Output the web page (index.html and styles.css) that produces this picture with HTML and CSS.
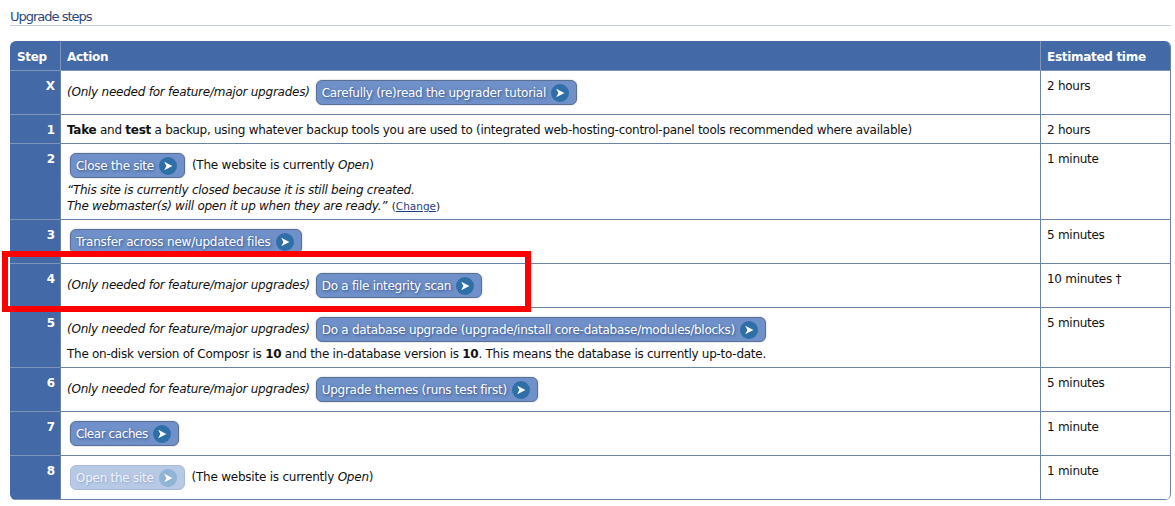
FILE: index.html
```html
<!DOCTYPE html>
<html lang="en">
<head>
<meta charset="utf-8">
<title>Upgrade steps</title>
<link rel="stylesheet" href="styles.css">
</head>
<body>
<svg class="defs" width="0" height="0" aria-hidden="true"><symbol id="go" viewBox="0 0 18 18"><circle cx="9" cy="9" r="9" fill="currentColor"/><path d="M5.2 4.8 13.4 9l-8.2 4.2L7.4 9z" fill="#fff"/></symbol></svg>
<h2 class="heading">Upgrade steps</h2>
<table class="steps">
<colgroup><col class="c-step"><col class="c-action"><col class="c-time"></colgroup>
<thead><tr><th class="step">Step</th><th>Action</th><th>Estimated time</th></tr></thead>
<tbody>
<tr class="r44"><th class="step">X</th><td><div class="line"><em>(Only needed for feature/major upgrades)</em> <a class="btn">Carefully (re)read the upgrader tutorial<svg class="ico"><use href="#go"/></svg></a></div></td><td>2 hours</td></tr>
<tr class="r29"><th class="step">1</th><td class="plain"><strong>Take</strong> and <strong>test</strong> a backup, using whatever backup tools you are used to (integrated web-hosting-control-panel tools recommended where available)</td><td class="plain">2 hours</td></tr>
<tr><th class="step">2</th><td><div class="line"><a class="btn first">Close the site<svg class="ico"><use href="#go"/></svg></a> <span class="after">(The website is currently <em>Open</em>)</span></div><p class="quote"><em>“This site is currently closed because it is still being created.<br>The webmaster(s) will open it up when they are ready.”</em> <small>(<a class="link">Change</a>)</small></p></td><td>1 minute</td></tr>
<tr class="r44"><th class="step">3</th><td><div class="line"><a class="btn first loose">Transfer across new/updated files<svg class="ico"><use href="#go"/></svg></a></div></td><td>5 minutes</td></tr>
<tr class="r44"><th class="step">4</th><td><div class="line"><em>(Only needed for feature/major upgrades)</em> <a class="btn">Do a file integrity scan<svg class="ico"><use href="#go"/></svg></a></div></td><td>10 minutes †</td></tr>
<tr><th class="step">5</th><td><div class="line"><em>(Only needed for feature/major upgrades)</em> <a class="btn">Do a database upgrade (upgrade/install core-database/modules/blocks)<svg class="ico"><use href="#go"/></svg></a></div><p class="note">The on-disk version of Composr is <strong>10</strong> and the in-database version is <strong>10</strong>. This means the database is currently up-to-date.</p></td><td>5 minutes</td></tr>
<tr class="r44"><th class="step">6</th><td><div class="line"><em>(Only needed for feature/major upgrades)</em> <a class="btn">Upgrade themes (runs test first)<svg class="ico"><use href="#go"/></svg></a></div></td><td>5 minutes</td></tr>
<tr class="r44"><th class="step">7</th><td><div class="line"><a class="btn first tight">Clear caches<svg class="ico"><use href="#go"/></svg></a></div></td><td>1 minute</td></tr>
<tr class="r44"><th class="step">8</th><td><div class="line"><a class="btn first off">Open the site<svg class="ico"><use href="#go"/></svg></a> <span class="after">(The website is currently <em>Open</em>)</span></div></td><td>1 minute</td></tr>
</tbody>
</table>
<div class="highlight"></div>
</body>
</html>
```
FILE: styles.css
```css
* { box-sizing: border-box; }
html, body { margin: 0; padding: 0; }
body { position: relative; height: 506px; overflow: hidden; padding: 9px 4px 0 10px; background: #fff; color: #111; font: 12px/16px "DejaVu Sans", Verdana, sans-serif; letter-spacing: -0.27px; }
.defs { position: absolute; }
.heading { margin: 0 0 15px; height: 17px; border-bottom: 1px solid #c3cfe0; font-size: 13px; line-height: 16px; font-weight: 400; color: #2c4a80; letter-spacing: -1px; }
.steps { width: 1161px; table-layout: fixed; border-collapse: separate; border-spacing: 0; border-right: 1px solid #6a84a8; border-radius: 6px; overflow: hidden; }
.c-step { width: 50px; }
.c-time { width: 130px; }
thead th { height: 30px; padding: 2px 6px 0; background: #4369a7; color: #fff; font-weight: 700; text-align: left; letter-spacing: -0.3px; border-bottom: 1px solid #7d95b8; border-left: 1px solid #7d95b8; }
thead th.step { border-left: 0; padding-left: 7px; }
tbody th.step { padding: 7px 5px 0 0; background: #4369a7; color: #fff; text-align: right; vertical-align: top; font-weight: 700; letter-spacing: 0; border-bottom: 1px solid #7d95b8; }
tbody td { padding: 7px 6px; vertical-align: top; border-left: 1px solid #6a84a8; border-bottom: 1px solid #6a84a8; }
.r44 { height: 44px; }
.r29 { height: 29px; }
tbody td.plain { padding-bottom: 5px; }
.line { display: flex; align-items: center; min-height: 27px; margin-top: 1px; gap: 6px; white-space: nowrap; }
.btn { display: inline-flex; align-items: center; height: 25px; padding: 0 7px 0 5px; border: 1px solid #5a6f94; border-radius: 6px; background: #6f90c8; color: #fff; text-shadow: 1px 1px 3px #2f4a80; box-shadow: 0 0 2px rgba(40,60,100,.35); letter-spacing: -0.27px; }
.btn.first { margin-left: 3px; }
.btn.loose { letter-spacing: -0.21px; }
.btn.tight { letter-spacing: -0.43px; }
.after { margin: -2px 0 0 1px; letter-spacing: -0.23px; }
.ico { width: 18px; height: 18px; margin-left: 5px; color: #2f6fa8; flex: none; }
.off { background: #b7c9e4; border-color: #a9bcd9; color: #eef3fa; text-shadow: 1px 1px 2px #8fa5c8; box-shadow: none; }
.off .ico { color: #8fb4d6; }
.line > em { margin-top: -2px; letter-spacing: -0.24px; }
.quote { margin: 3px 0 -2px; letter-spacing: -0.27px; }
small { margin-left: 1px; font-size: 10.5px; letter-spacing: 0; }
.link { color: #1f3f85; text-decoration: underline; }
.note { margin: 3px 0 -2px; }
.highlight { position: absolute; left: 2px; top: 251px; width: 529px; height: 61px; border: 6px solid #fe0000; pointer-events: none; }
```
